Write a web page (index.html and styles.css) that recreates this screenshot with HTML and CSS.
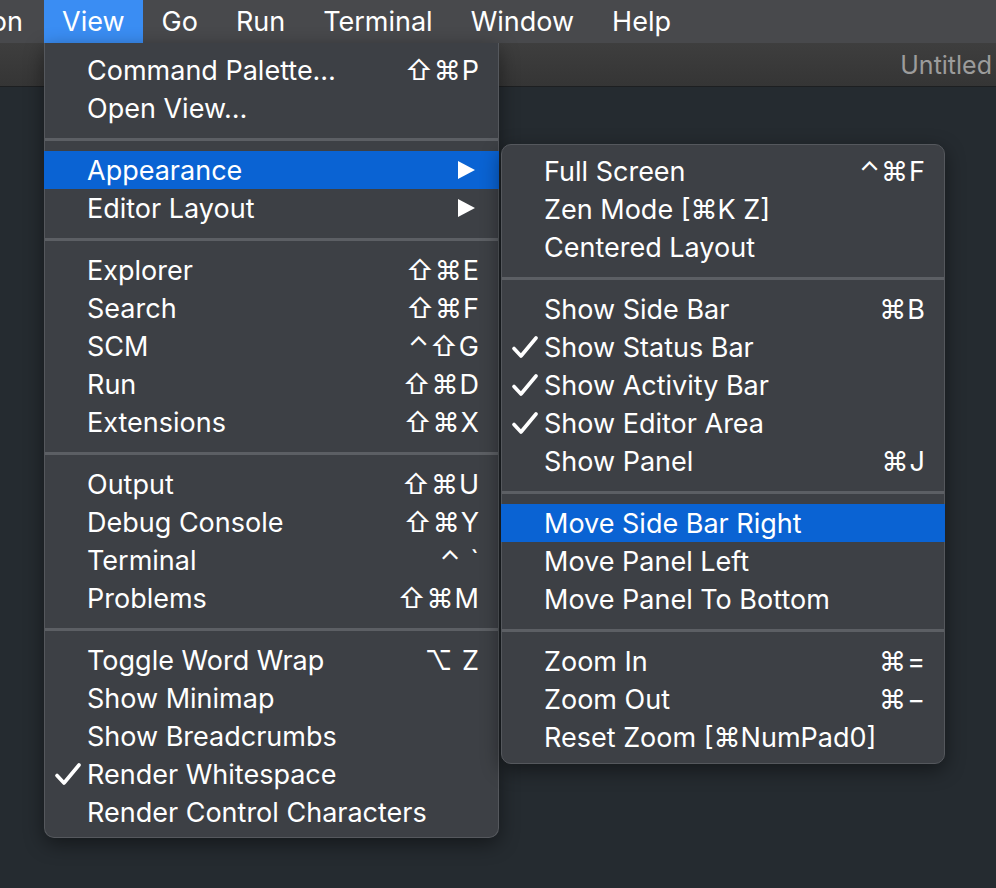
FILE: index.html
```html
<!DOCTYPE html>
<html>
<head>
<meta charset="utf-8">
<link rel="stylesheet" href="styles.css">
</head>
<body>
<div class="menubar">
  <span class="mb-item mb-cut">on</span>
  <span class="mb-item mb-active">View</span>
  <span class="mb-item">Go</span>
  <span class="mb-item">Run</span>
  <span class="mb-item">Terminal</span>
  <span class="mb-item">Window</span>
  <span class="mb-item">Help</span>
</div>
<div class="titlebar"><span class="title">Untitled</span></div>
<div class="editor"></div>

<div class="menu main">
  <div class="item"><span class="chk"></span><span class="lbl">Command Palette…</span><span class="sc">⇧⌘P</span></div>
  <div class="item"><span class="chk"></span><span class="lbl">Open View…</span></div>
  <div class="sep"></div>
  <div class="item hl"><span class="chk"></span><span class="lbl">Appearance</span><svg class="arrow" viewBox="0 0 17 18"><path d="M0 0 L17 9 L0 18 Z" fill="#fff"/></svg></div>
  <div class="item"><span class="chk"></span><span class="lbl">Editor Layout</span><svg class="arrow" viewBox="0 0 17 18"><path d="M0 0 L17 9 L0 18 Z" fill="#fff"/></svg></div>
  <div class="sep"></div>
  <div class="item"><span class="chk"></span><span class="lbl">Explorer</span><span class="sc">⇧⌘E</span></div>
  <div class="item"><span class="chk"></span><span class="lbl">Search</span><span class="sc">⇧⌘F</span></div>
  <div class="item"><span class="chk"></span><span class="lbl">SCM</span><span class="sc">⌃⇧G</span></div>
  <div class="item"><span class="chk"></span><span class="lbl">Run</span><span class="sc">⇧⌘D</span></div>
  <div class="item"><span class="chk"></span><span class="lbl">Extensions</span><span class="sc">⇧⌘X</span></div>
  <div class="sep"></div>
  <div class="item"><span class="chk"></span><span class="lbl">Output</span><span class="sc">⇧⌘U</span></div>
  <div class="item"><span class="chk"></span><span class="lbl">Debug Console</span><span class="sc">⇧⌘Y</span></div>
  <div class="item"><span class="chk"></span><span class="lbl">Terminal</span><span class="sc">⌃ `</span></div>
  <div class="item"><span class="chk"></span><span class="lbl">Problems</span><span class="sc">⇧⌘M</span></div>
  <div class="sep"></div>
  <div class="item"><span class="chk"></span><span class="lbl">Toggle Word Wrap</span><span class="sc">⌥ Z</span></div>
  <div class="item"><span class="chk"></span><span class="lbl">Show Minimap</span></div>
  <div class="item"><span class="chk"></span><span class="lbl">Show Breadcrumbs</span></div>
  <div class="item"><span class="chk"><svg class="check" viewBox="0 0 26 22"><path d="M2 12.5 L9 20 L24 2" fill="none" stroke="#fff" stroke-width="3.6" stroke-linecap="round" stroke-linejoin="round"/></svg></span><span class="lbl">Render Whitespace</span></div>
  <div class="item"><span class="chk"></span><span class="lbl">Render Control Characters</span></div>
</div>

<div class="menu sub">
  <div class="item"><span class="chk"></span><span class="lbl">Full Screen</span><span class="sc">⌃⌘F</span></div>
  <div class="item"><span class="chk"></span><span class="lbl">Zen Mode [⌘K Z]</span></div>
  <div class="item"><span class="chk"></span><span class="lbl">Centered Layout</span></div>
  <div class="sep"></div>
  <div class="item"><span class="chk"></span><span class="lbl">Show Side Bar</span><span class="sc">⌘B</span></div>
  <div class="item"><span class="chk"><svg class="check" viewBox="0 0 26 22"><path d="M2 12.5 L9 20 L24 2" fill="none" stroke="#fff" stroke-width="3.6" stroke-linecap="round" stroke-linejoin="round"/></svg></span><span class="lbl">Show Status Bar</span></div>
  <div class="item"><span class="chk"><svg class="check" viewBox="0 0 26 22"><path d="M2 12.5 L9 20 L24 2" fill="none" stroke="#fff" stroke-width="3.6" stroke-linecap="round" stroke-linejoin="round"/></svg></span><span class="lbl">Show Activity Bar</span></div>
  <div class="item"><span class="chk"><svg class="check" viewBox="0 0 26 22"><path d="M2 12.5 L9 20 L24 2" fill="none" stroke="#fff" stroke-width="3.6" stroke-linecap="round" stroke-linejoin="round"/></svg></span><span class="lbl">Show Editor Area</span></div>
  <div class="item"><span class="chk"></span><span class="lbl">Show Panel</span><span class="sc">⌘J</span></div>
  <div class="sep"></div>
  <div class="item hl"><span class="chk"></span><span class="lbl">Move Side Bar Right</span></div>
  <div class="item"><span class="chk"></span><span class="lbl">Move Panel Left</span></div>
  <div class="item"><span class="chk"></span><span class="lbl">Move Panel To Bottom</span></div>
  <div class="sep"></div>
  <div class="item"><span class="chk"></span><span class="lbl">Zoom In</span><span class="sc">⌘=</span></div>
  <div class="item"><span class="chk"></span><span class="lbl">Zoom Out</span><span class="sc">⌘−</span></div>
  <div class="item"><span class="chk"></span><span class="lbl">Reset Zoom [⌘NumPad0]</span></div>
</div>
</body>
</html>
```

FILE: styles.css
```css
* { box-sizing: border-box; }
html, body {
  margin: 0;
  height: 100%;
}
body {
  background: #252b30;
  font-family: "Inter", "DejaVu Sans", sans-serif;
  font-size: 27px;
  color: #fff;
  overflow: hidden;
  position: relative;
  width: 996px;
  height: 888px;
}
.menubar {
  height: 43px;
  background: #48494c;
  display: flex;
  align-items: stretch;
}
.mb-item {
  display: flex;
  align-items: center;
  padding: 0 19px;
  color: #fff;
  line-height: 1;
  white-space: nowrap;
}
.mb-cut {
  width: 44px;
  padding: 0 21px 0 0;
  justify-content: flex-end;
  overflow: hidden;
}
.mb-active {
  background: #3a8df3;
  padding: 0 18px;
}
.titlebar {
  height: 44px;
  background: linear-gradient(#3e3e3e, #353535);
  border-bottom: 1px solid #1d1f21;
  display: flex;
  align-items: center;
  justify-content: flex-end;
  white-space: nowrap;
}
.title {
  color: #9c9c9c;
  margin-right: 4px;
  font-size: 25px;
}
.editor {
  height: 801px;
  background: #252b30;
}
.menu {
  position: absolute;
  background: #3d4045;
  display: flex;
  flex-direction: column;
  box-shadow: 0 6px 20px rgba(0,0,0,0.45);
}
.main {
  left: 44px;
  top: 43px;
  width: 455px;
  padding: 8px 0 6px;
  border-radius: 0 0 10px 10px;
  border: 1px solid #55585d;
  border-top: none;
}
.sub {
  left: 501px;
  top: 144px;
  width: 444px;
  padding: 7px 0 7px;
  border-radius: 10px;
  border: 1px solid #55585d;
}
.item {
  height: 38px;
  display: flex;
  align-items: center;
  padding-right: 19px;
  white-space: nowrap;
  margin: 0 -1px;
}
.item.hl {
  background: #0a63d3;
}
.chk {
  width: 43px;
  flex: none;
  display: flex;
  align-items: center;
  padding-left: 11px;
}
.check {
  width: 26px;
  height: 22px;
  display: block;
}
.lbl {
  flex: 1;
  line-height: 1;
}
.sc {
  line-height: 1;
  letter-spacing: 1px;
}
.arrow {
  width: 17px;
  height: 18px;
  margin-right: 5px;
}
.sep {
  height: 24px;
  display: flex;
  align-items: flex-start;
  padding-top: 11px;
}
.sep::before {
  content: "";
  display: block;
  height: 3px;
  width: 100%;
  background: #5c5f64;
}
```
